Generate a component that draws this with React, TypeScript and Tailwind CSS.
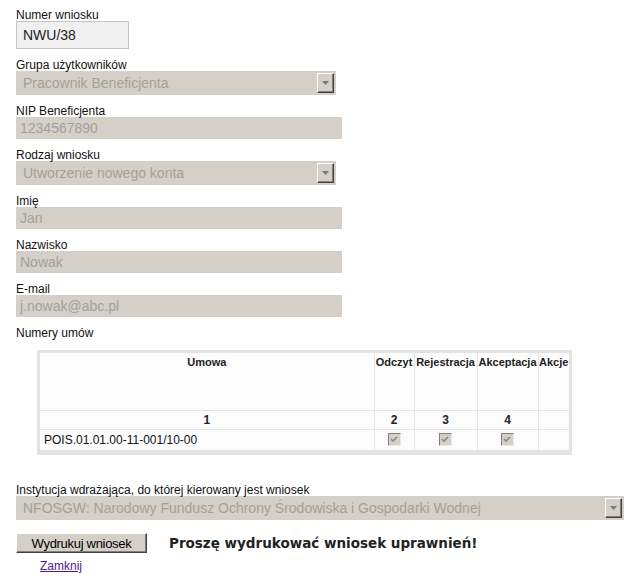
import React from "react";

const font = { fontFamily: '"Liberation Sans", Arial, sans-serif' };

function Label({ children, className = "" }: { children: React.ReactNode; className?: string }) {
  return <div className={`text-[12px] leading-[9px] text-[#111] ${className}`}>{children}</div>;
}

function TextBox({ value }: { value: string }) {
  return (
    <div className="mt-[1px] flex h-[22px] w-[326px] items-center bg-[#d4d0c8] pl-[4px] text-[14px] text-[#a3a09a]">
      {value}
    </div>
  );
}

function DropButton() {
  return (
    <div className="flex h-[20px] w-[17px] items-center justify-center border border-b-[#404040] border-l-white border-r-[#404040] border-t-white bg-[#d4d0c8] shadow-[inset_-1px_-1px_0_#808080]">
      <svg width="7" height="4" viewBox="0 0 7 4">
        <path d="M0 0h7L3.5 4z" fill="#7a7a7a" />
      </svg>
    </div>
  );
}

function SelectBox({ value, width }: { value: string; width: string }) {
  return (
    <div className={`mt-[1px] flex h-[24px] items-center justify-between bg-[#d4d0c8] pl-[7px] pr-[2px] text-[14px] text-[#a3a09a] ${width}`}>
      <span>{value}</span>
      <DropButton />
    </div>
  );
}

function Check() {
  return (
    <div className="mx-auto flex h-[13px] w-[13px] items-center justify-center border border-b-[#e8e8e8] border-l-[#808080] border-r-[#e8e8e8] border-t-[#808080] bg-[#d4d0c8]">
      <svg width="9" height="9" viewBox="0 0 9 9">
        <path d="M1 4l2 2 4-4" stroke="#8a8a8a" strokeWidth="1.6" fill="none" />
      </svg>
    </div>
  );
}

export default function App() {
  const th = "border-x border-[#e3e3e3] align-top text-center text-[11px] font-bold text-[#222] pt-[1px]";
  return (
    <div className="min-h-[582px] bg-white pl-[16px] pt-[11px]" style={font}>
      <Label>Numer wniosku</Label>
      <div className="mt-[1px] flex h-[28px] w-[113px] items-center border border-[#c4c4c4] bg-[#f0f0f0] pl-[6px] text-[14px] text-[#222]">
        NWU/38
      </div>

      <Label className="mt-[12px]">Grupa użytkowników</Label>
      <SelectBox value="Pracownik Beneficjenta" width="w-[320px]" />

      <Label className="mt-[12px]">NIP Beneficjenta</Label>
      <TextBox value="1234567890" />

      <Label className="mt-[12px]">Rodzaj wniosku</Label>
      <SelectBox value="Utworzenie nowego konta" width="w-[320px]" />

      <Label className="mt-[12px]">Imię</Label>
      <TextBox value="Jan" />

      <Label className="mt-[12px]">Nazwisko</Label>
      <TextBox value="Nowak" />

      <Label className="mt-[12px]">E-mail</Label>
      <TextBox value="j.nowak@abc.pl" />

      <Label className="mt-[12px]">Numery umów</Label>

      <div className="ml-[21px] mt-[12px] w-[535px] border-[3px] border-b-[5px] border-[#e3e3e3] bg-[#fcfcfc]">
        <table className="w-full table-fixed border-collapse">
          <colgroup>
            <col className="w-[334px]" />
            <col className="w-[40px]" />
            <col className="w-[63px]" />
            <col className="w-[61px]" />
            <col />
          </colgroup>
          <tbody>
            <tr className="h-[57px] border-b border-[#e3e3e3]">
              <th className={`${th} border-l-0`}>Umowa</th>
              <th className={th}>Odczyt</th>
              <th className={th}>Rejestracja</th>
              <th className={th}>Akceptacja</th>
              <th className={`${th} border-r-0`}>Akcje</th>
            </tr>
            <tr className="h-[17px] border-b border-[#e3e3e3] text-center text-[12px] font-bold text-[#222]">
              <td className="border-x border-[#e3e3e3] border-l-0">1</td>
              <td className="border-x border-[#e3e3e3]">2</td>
              <td className="border-x border-[#e3e3e3]">3</td>
              <td className="border-x border-[#e3e3e3]">4</td>
              <td className="border-x border-[#e3e3e3] border-r-0"></td>
            </tr>
            <tr className="h-[21px] text-[12px] text-[#111]">
              <td className="border-x border-[#e3e3e3] border-l-0 pl-[4px]">POIS.01.01.00-11-001/10-00</td>
              <td className="border-x border-[#e3e3e3]"><Check /></td>
              <td className="border-x border-[#e3e3e3]"><Check /></td>
              <td className="border-x border-[#e3e3e3]"><Check /></td>
              <td className="border-x border-[#e3e3e3] border-r-0"></td>
            </tr>
          </tbody>
        </table>
      </div>

      <Label className="mt-[31px]">Instytucja wdrażająca, do której kierowany jest wniosek</Label>
      <SelectBox
        value="NFOSGW: Narodowy Fundusz Ochrony Środowiska i Gospodarki Wodnej"
        width="w-[608px]"
      />

      <div className="mt-[13px] flex items-center">
        <button className="h-[20px] w-[131px] border border-b-[#404040] border-l-white border-r-[#404040] border-t-white bg-[#d4d0c8] text-[13px] tracking-[-0.3px] text-black shadow-[inset_-1px_-1px_0_#808080]">
          Wydrukuj wniosek
        </button>
        <span
          className="ml-[22px] text-[13.5px] font-bold text-[#222]"
          style={{ fontFamily: '"DejaVu Sans", Verdana, sans-serif' }}
        >
          Proszę wydrukować wniosek uprawnień!
        </span>
      </div>
      <a href="#" className="ml-[24px] inline-block text-[12px] leading-[14px] text-[#551a8b] underline">
        Zamknij
      </a>
    </div>
  );
}
